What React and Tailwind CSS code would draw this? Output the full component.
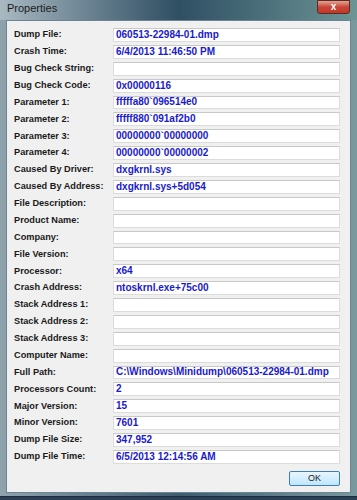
import React from 'react';

const rows = [
  ['Dump File:', '060513-22984-01.dmp'],
  ['Crash Time:', '6/4/2013 11:46:50 PM'],
  ['Bug Check String:', ''],
  ['Bug Check Code:', '0x00000116'],
  ['Parameter 1:', 'fffffa80`096514e0'],
  ['Parameter 2:', 'fffff880`091af2b0'],
  ['Parameter 3:', '00000000`00000000'],
  ['Parameter 4:', '00000000`00000002'],
  ['Caused By Driver:', 'dxgkrnl.sys'],
  ['Caused By Address:', 'dxgkrnl.sys+5d054'],
  ['File Description:', ''],
  ['Product Name:', ''],
  ['Company:', ''],
  ['File Version:', ''],
  ['Processor:', 'x64'],
  ['Crash Address:', 'ntoskrnl.exe+75c00'],
  ['Stack Address 1:', ''],
  ['Stack Address 2:', ''],
  ['Stack Address 3:', ''],
  ['Computer Name:', ''],
  ['Full Path:', 'C:\\Windows\\Minidump\\060513-22984-01.dmp'],
  ['Processors Count:', '2'],
  ['Major Version:', '15'],
  ['Minor Version:', '7601'],
  ['Dump File Size:', '347,952'],
  ['Dump File Time:', '6/5/2013 12:14:56 AM'],
];

function Row({ label, value }) {
  return (
    <div className="flex items-center h-[13.88px]">
      <div className="w-[106px] pl-[7px] text-[9.2px] font-bold text-[#1a1a1a] leading-none whitespace-nowrap">
        {label}
      </div>
      <div className="w-[227px] h-[13.88px] bg-white border border-[#dcdcdc] border-t-[#c8c8c8] flex items-center pl-[2px] text-[10px] font-bold text-[#1a1acc] leading-none whitespace-nowrap overflow-hidden">
        {value}
      </div>
    </div>
  );
}

export default function App() {
  return (
    <div
      className="w-[357px] h-[500px] relative overflow-hidden bg-gradient-to-r from-[#8fa3ad] via-[#3e5d70] to-[#7a9aa0]"
      style={{ fontFamily: '"Liberation Sans", Arial, sans-serif' }}
    >
      {/* glass title bar */}
      <div className="h-[20px] flex items-start bg-gradient-to-r from-[#a9b9c1] via-[#2f4f63] to-[#6d9595]">
        <div className="pl-[7px] pt-[3px] text-[11px] text-[#1c1c1c] leading-none">Properties</div>
        <div className="ml-auto mr-[7px] w-[33px] h-[14px] rounded-b-[3px] border border-[#5a2a26] bg-gradient-to-b from-[#e3a293] via-[#c7453a] to-[#c2391f] flex items-center justify-center">
          <span className="text-white text-[10px] font-bold leading-none">x</span>
        </div>
      </div>

      {/* client area */}
      <div className="ml-[6px] w-[345px] h-[473px] bg-[#f0f0f0] border border-[#6e8494] pt-[7px]">
        <div className="flex flex-col gap-[3px]">
          {rows.map(([l, v]) => (
            <Row key={l} label={l} value={v} />
          ))}
        </div>
        <div className="flex justify-end pr-[10px] mt-[7px]">
          <div className="w-[51px] h-[15px] rounded-[2px] border border-[#3c7fb1] bg-gradient-to-b from-[#eaf6fd] to-[#bee6fd] flex items-center justify-center text-[9px] text-[#1a1a1a] leading-none">
            OK
          </div>
        </div>
      </div>

      {/* bottom frame */}
      <div className="absolute left-0 right-0 bottom-0 h-[4px] bg-[#2a3e54] border-t border-[#1c2a3a]" />
    </div>
  );
}
